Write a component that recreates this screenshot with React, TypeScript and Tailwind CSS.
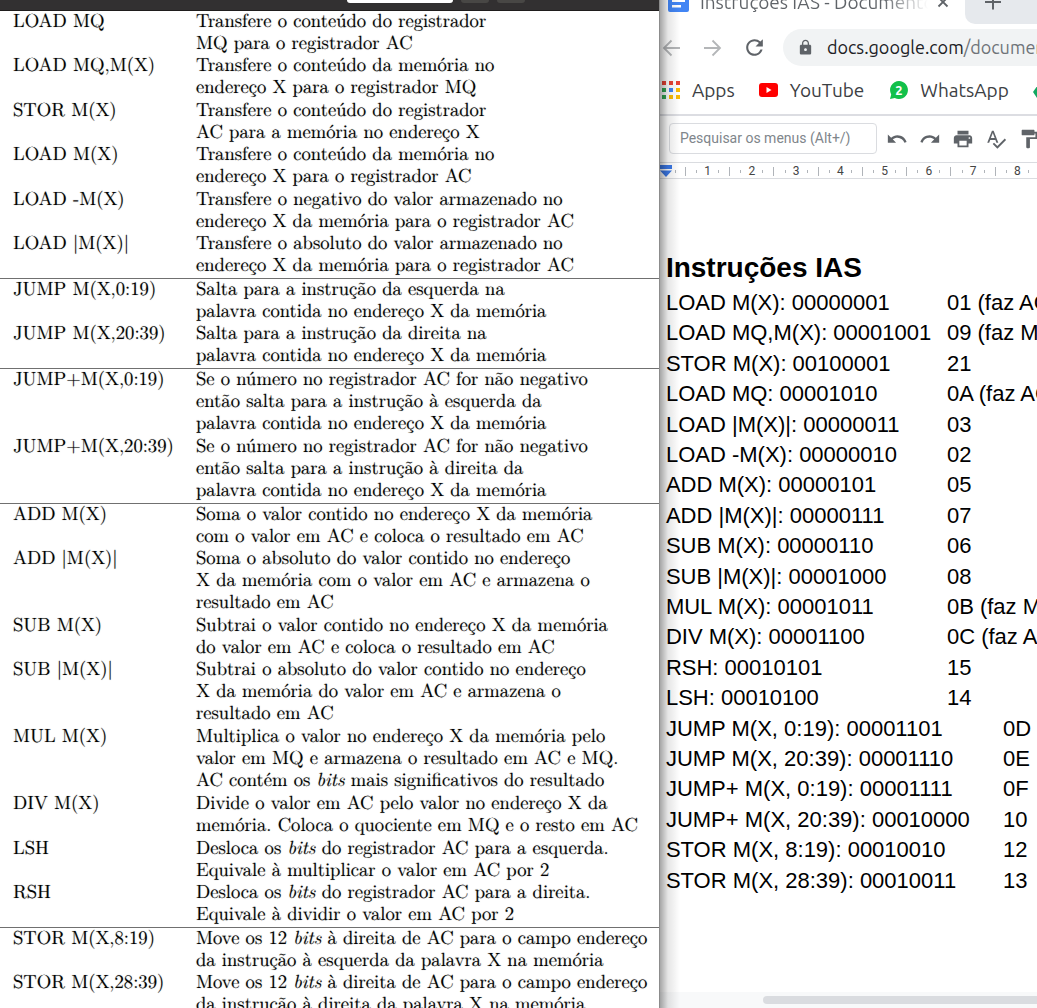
import type { ReactNode } from "react";
import { MdFormatPaint, MdLock, MdPrint, MdRedo, MdRefresh, MdSpellcheck, MdUndo } from "react-icons/md";

type Entry = { op: string; lines: ReactNode[] };

const bits = <i>bits</i>;

const sections: Entry[][] = [
  [
    { op: "LOAD MQ", lines: ["Transfere o conteúdo do registrador", "MQ para o registrador AC"] },
    { op: "LOAD MQ,M(X)", lines: ["Transfere o conteúdo da memória no", "endereço X para o registrador MQ"] },
    { op: "STOR M(X)", lines: ["Transfere o conteúdo do registrador", "AC para a memória no endereço X"] },
    { op: "LOAD M(X)", lines: ["Transfere o conteúdo da memória no", "endereço X para o registrador AC"] },
    { op: "LOAD -M(X)", lines: ["Transfere o negativo do valor armazenado no", "endereço X da memória para o registrador AC"] },
    { op: "LOAD |M(X)|", lines: ["Transfere o absoluto do valor armazenado no", "endereço X da memória para o registrador AC"] },
  ],
  [
    { op: "JUMP M(X,0:19)", lines: ["Salta para a instrução da esquerda na", "palavra contida no endereço X da memória"] },
    { op: "JUMP M(X,20:39)", lines: ["Salta para a instrução da direita na", "palavra contida no endereço X da memória"] },
  ],
  [
    { op: "JUMP+M(X,0:19)", lines: ["Se o número no registrador AC for não negativo", "então salta para a instrução à esquerda da", "palavra contida no endereço X da memória"] },
    { op: "JUMP+M(X,20:39)", lines: ["Se o número no registrador AC for não negativo", "então salta para a instrução à direita da", "palavra contida no endereço X da memória"] },
  ],
  [
    { op: "ADD M(X)", lines: ["Soma o valor contido no endereço X da memória", "com o valor em AC e coloca o resultado em AC"] },
    { op: "ADD |M(X)|", lines: ["Soma o absoluto do valor contido no endereço", "X da memória com o valor em AC e armazena o", "resultado em AC"] },
    { op: "SUB M(X)", lines: ["Subtrai o valor contido no endereço X da memória", "do valor em AC e coloca o resultado em AC"] },
    { op: "SUB |M(X)|", lines: ["Subtrai o absoluto do valor contido no endereço", "X da memória do valor em AC e armazena o", "resultado em AC"] },
    { op: "MUL M(X)", lines: ["Multiplica o valor no endereço X da memória pelo", "valor em MQ e armazena o resultado em AC e MQ.", <>AC contém os {bits} mais significativos do resultado</>] },
    { op: "DIV M(X)", lines: ["Divide o valor em AC pelo valor no endereço X da", "memória. Coloca o quociente em MQ e o resto em AC"] },
    { op: "LSH", lines: [<>Desloca os {bits} do registrador AC para a esquerda.</>, "Equivale à multiplicar o valor em AC por 2"] },
    { op: "RSH", lines: [<>Desloca os {bits} do registrador AC para a direita.</>, "Equivale à dividir o valor em AC por 2"] },
  ],
  [
    { op: "STOR M(X,8:19)", lines: [<>Move os 12 {bits} à direita de AC para o campo endereço</>, "da instrução à esquerda da palavra X na memória"] },
    { op: "STOR M(X,28:39)", lines: [<>Move os 12 {bits} à direita de AC para o campo endereço</>, "da instrução à direita da palavra X na memória"] },
  ],
];

const codes: [string, string, boolean?][] = [
  ["LOAD M(X): 00000001", "01 (faz AC = M(X))"],
  ["LOAD MQ,M(X): 00001001", "09 (faz MQ = M(X))"],
  ["STOR M(X): 00100001", "21"],
  ["LOAD MQ: 00001010", "0A (faz AC = MQ)"],
  ["LOAD |M(X)|: 00000011", "03"],
  ["LOAD -M(X): 00000010", "02"],
  ["ADD M(X): 00000101", "05"],
  ["ADD |M(X)|: 00000111", "07"],
  ["SUB M(X): 00000110", "06"],
  ["SUB |M(X)|: 00001000", "08"],
  ["MUL M(X): 00001011", "0B (faz MQ = MQ)"],
  ["DIV M(X): 00001100", "0C (faz AC = AC)"],
  ["RSH: 00010101", "15"],
  ["LSH: 00010100", "14"],
  ["JUMP M(X, 0:19): 00001101", "0D", true],
  ["JUMP M(X, 20:39): 00001110", "0E", true],
  ["JUMP+ M(X, 0:19): 00001111", "0F", true],
  ["JUMP+ M(X, 20:39): 00010000", "10", true],
  ["STOR M(X, 8:19): 00010010", "12", true],
  ["STOR M(X, 28:39): 00010011", "13", true],
];

function PdfPane() {
  return (
    <section className="relative z-10 min-w-0 overflow-hidden border-r border-[#8c8c8c] bg-white">
      <header className="flex h-[11px] items-start gap-2 border-b border-[#1f1d1d] bg-[#323031] pl-[347px]">
        <div className="h-[3px] w-[106px] rounded-b-sm bg-white" />
        <div className="h-[3px] w-7 rounded-b-sm bg-[#484745]" />
        <div className="h-[3px] w-7 rounded-b-sm bg-[#484745]" />
      </header>
      <table className="w-full table-fixed border-separate border-spacing-0 whitespace-nowrap text-left font-['LM_Roman_12','Latin_Modern_Roman','Liberation_Serif',serif] text-[19px] leading-[22px] text-black [text-rendering:geometricPrecision] [text-shadow:0_0_1px_rgba(0,0,0,0.5)]">
        <colgroup>
          <col className="w-[196px]" />
          <col />
        </colgroup>
        {sections.map((rows, s) => (
          <tbody key={s}>
            {rows.map((row, r) => {
              const rule = s > 0 && r === 0 ? "border-t border-[#707070]" : "";
              const foot = row.lines.length === 3 || r % 2 === 1 ? "pb-[3px]" : "pb-[2px]";
              return (
                <tr key={row.op} className="align-top">
                  <th scope="row" className={`pl-[13px] font-normal ${rule} ${foot}`}>
                    <p className="-mt-[2px]">{row.op}</p>
                  </th>
                  <td className={`${rule} ${foot}`}>
                    <div className="-mt-[2px]">
                      {row.lines.map((line, i) => (
                        <p key={i}>{line}</p>
                      ))}
                    </div>
                  </td>
                </tr>
              );
            })}
          </tbody>
        ))}
      </table>
    </section>
  );
}

function Arrow({ flip = false }: { flip?: boolean }) {
  return (
    <svg viewBox="0 0 18 18" className={flip ? "size-[18px] rotate-180" : "size-[18px]"} fill="none" stroke="#b4b6b8" strokeWidth="1.8">
      <path d="M18 9H2M9.500 1.500 2 9l7.500 7.500" />
    </svg>
  );
}

function AppsIcon() {
  const fills = ["#ea4335", "#ea4335", "#ea4335", "#34a853", "#4285f4", "#fbbc04", "#34a853", "#fbbc04", "#fbbc04"];
  return (
    <svg viewBox="0 0 18 18" className="size-[18px]">
      {fills.map((fill, i) => (
        <rect key={i} x={(i % 3) * 7} y={Math.floor(i / 3) * 7} width="4" height="4" fill={fill} />
      ))}
    </svg>
  );
}

function TabStrip() {
  return (
    <div className="flex h-6 items-start">
      <svg viewBox="0 0 21 12" className="ml-2 h-3 w-[21px] shrink-0">
        <path d="M0 0h21v10a2 2 0 0 1-2 2H2a2 2 0 0 1-2-2z" fill="#4285f4" />
        <path d="M4 0h13v2H4zM4 5h9v2.500H4z" fill="#fff" />
      </svg>
      <div className="ml-[11px] flex h-[13px] w-[228px] shrink-0 items-end overflow-hidden whitespace-nowrap bg-gradient-to-r from-[#5f6368] from-80% to-transparent bg-clip-text text-[19px] leading-[22px] text-transparent">
        Instruções IAS - Documentos
      </div>
      <button aria-label="Fechar guia" className="ml-[9px] shrink-0">
        <svg viewBox="0 0 12 8" className="h-2 w-3" stroke="#5f6368" strokeWidth="1.8">
          <path d="M1.500-2.500 10.500 6.500M10.500-2.500 1.500 6.500" />
        </svg>
      </button>
      <div className="ml-4 h-6 flex-1 rounded-bl-[10px] bg-[#e6e9ed] pl-[20px]">
        <button aria-label="Nova guia" className="block">
          <svg viewBox="0 0 16 10" className="h-[10px] w-4" stroke="#5f6368" strokeWidth="2">
            <path d="M0 2h16M8 0v9.500" />
          </svg>
        </button>
      </div>
    </div>
  );
}

function Bookmarks() {
  return (
    <nav className="mt-2 flex h-8 items-center whitespace-nowrap text-[19px] text-[#3c4043]">
      <a href="#apps" className="ml-[2px] flex items-center gap-3">
        <AppsIcon />
        Apps
      </a>
      <a href="#youtube" className="ml-6 flex items-center gap-3">
        <svg viewBox="0 0 19 14" className="h-[14px] w-[19px]">
          <rect width="19" height="14" rx="3" fill="#f00" />
          <path d="M7.500 4v6l5-3z" fill="#fff" />
        </svg>
        YouTube
      </a>
      <a href="#whatsapp" className="ml-[26px] flex items-center gap-3">
        <svg viewBox="0 0 18 18" className="size-[18px]">
          <path d="M9 0a9 9 0 1 1-4.200 17L0 18l1.200-4.600A9 9 0 0 1 9 0z" fill="#12c04a" />
          <text x="9" y="14" textAnchor="middle" fontSize="13" fontWeight="700" fill="#fff">2</text>
        </svg>
        WhatsApp
      </a>
      <a href="#drive" aria-label="Drive" className="ml-6">
        <svg viewBox="0 0 20 18" className="h-[18px] w-5">
          <path d="M7 1h6L4 17 0 11z" fill="#11a861" />
          <path d="M7 1h6l7 10h-6z" fill="#fbbc04" />
          <path d="M4 17l3-6h13l-3 6z" fill="#4285f4" />
        </svg>
      </a>
    </nav>
  );
}

function DocsToolbar() {
  const tools = [
    { label: "Desfazer", Icon: MdUndo },
    { label: "Refazer", Icon: MdRedo },
    { label: "Imprimir", Icon: MdPrint },
    { label: "Ortografia", Icon: MdSpellcheck },
    { label: "Pintar formatação", Icon: MdFormatPaint },
  ];
  return (
    <div className="flex h-[46px] items-center pb-px pl-[9px]">
      <input
        aria-label="Pesquisar os menus"
        placeholder="Pesquisar os menus (Alt+/)"
        className="h-[31px] w-[208px] shrink-0 rounded border border-[#dadce0] px-[10px] pb-[2px] font-[Roboto,sans-serif] text-[14px] placeholder:text-[#80868b]"
      />
      <div className="ml-[9px] flex shrink-0 gap-[11px]">
        {tools.map(({ label, Icon }) => (
          <button key={label} aria-label={label} className="shrink-0 text-[#5f6368]">
            <Icon className="size-[22px]" />
          </button>
        ))}
      </div>
    </div>
  );
}

function Ruler() {
  return (
    <div className="flex h-[17px] border-y border-[#dadce0]">
      <svg viewBox="0 0 12 14" className="mt-px h-[14px] w-3 shrink-0" fill="#3b78e7">
        <path d="M0 1h12v4H0zM0 6.500h12L6 13z" />
      </svg>
      <div className="flex w-2 shrink-0 items-center justify-center pt-px">
        <span className="h-[3px] w-px bg-[#b0b4b9]" />
      </div>
      <div className="grid w-[354px] shrink-0 grid-cols-8 pt-px font-[Roboto,sans-serif] text-[12px] leading-[14px] text-[#444]">
        {[1, 2, 3, 4, 5, 6, 7, 8].map((n) => (
          <div key={n} className="grid grid-cols-4 items-center justify-items-center">
            <span className="h-[9px] w-px bg-[#b0b4b9]" />
            <span className="h-[3px] w-px bg-[#b0b4b9]" />
            <span>{n}</span>
            <span className="h-[3px] w-px bg-[#b0b4b9]" />
          </div>
        ))}
      </div>
    </div>
  );
}

function BrowserPane() {
  return (
    <section className="flex min-w-0 flex-col overflow-hidden bg-white font-['Ubuntu','Noto_Sans',sans-serif]">
      <TabStrip />
      <div className="mt-[5px] flex h-[37px] items-center">
        <button aria-label="Voltar" className="ml-[2px] shrink-0"><Arrow /></button>
        <button aria-label="Avançar" className="ml-6 shrink-0"><Arrow flip /></button>
        <button aria-label="Recarregar" className="ml-5 shrink-0 text-[#5f6368]"><MdRefresh className="size-[25px]" /></button>
        <div className="ml-4 flex h-full min-w-0 flex-1 items-center rounded-l-full bg-[#f1f3f4] pl-[14px]">
          <MdLock className="size-[17px] shrink-0 text-[#5f6368]" />
          <p className="ml-[13px] whitespace-nowrap text-[18px] text-[#202124]">
            docs.google.com<span className="text-[#6f7479]">/document/d/</span>
          </p>
        </div>
      </div>
      <Bookmarks />
      <div className="mt-2 border-t-2 border-[#dcdde2]">
        <DocsToolbar />
        <Ruler />
      </div>
      <main className="flex-1 whitespace-nowrap pl-[6px] pt-[72px] font-['Liberation_Sans',sans-serif] text-[22px] leading-[30px] text-black">
        <h1 className="pb-[3px] text-[28px] font-bold leading-[34px]">Instruções IAS</h1>
        <ul>
          {codes.map(([code, hex, wide], i) => (
            <li key={code} className={i % 5 === 1 || i % 5 === 3 ? "flex pb-px" : "flex"}>
              <span className={wide ? "w-[337px] shrink-0" : "w-[281px] shrink-0"}>{code}</span>
              <span>{hex}</span>
            </li>
          ))}
        </ul>
      </main>
      <div className="flex h-4 items-center bg-[#f8f9fa] pl-[103px]">
        <div className="h-2 flex-1 rounded-l-full bg-[#dadce0]" />
      </div>
    </section>
  );
}

export default function App() {
  return (
    <div className="grid h-screen grid-cols-[minmax(0,7fr)_minmax(0,4fr)] grid-rows-[minmax(0,1fr)] overflow-hidden bg-white">
      <PdfPane />
      <div className="relative grid min-w-0 grid-rows-[minmax(0,1fr)]">
        <BrowserPane />
        <div className="pointer-events-none absolute inset-y-0 left-0 w-5 bg-gradient-to-r from-black/35 via-black/10 via-40% to-transparent" />
      </div>
    </div>
  );
}
